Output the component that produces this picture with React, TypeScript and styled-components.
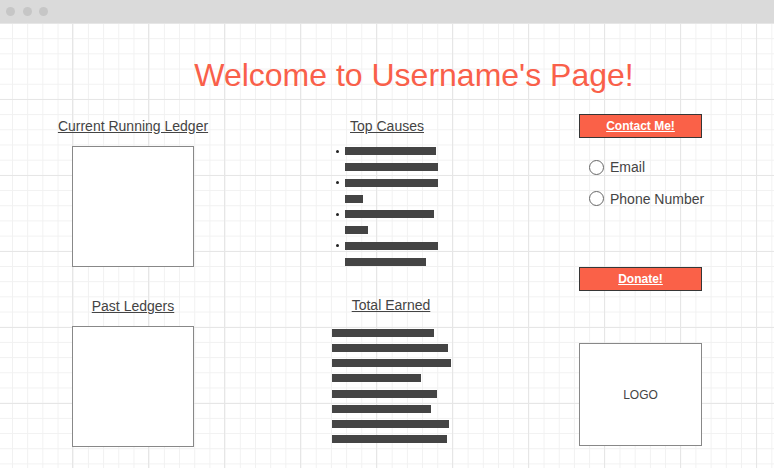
import styled, { createGlobalStyle } from 'styled-components'

const GlobalStyle = createGlobalStyle`
  html, body {
    margin: 0;
    padding: 0;
    background: #fff;
    overflow: hidden;
  }
  body {
    font-family: "Liberation Sans", Arial, sans-serif;
  }
`

const Window = styled.div`
  width: 774px;
  height: 468px;
  display: flex;
  flex-flow: column;
`

const TitleBar = styled.div`
  height: 23px;
  flex-shrink: 0;
  background: #dadada;
  display: flex;
  align-items: center;
  gap: 7.6px;
  padding-left: 6px;
`

const Dot = styled.span`
  width: 9px;
  height: 9px;
  border-radius: 50%;
  background: #c6c6c6;
`

const Canvas = styled.div`
  flex: 1;
  padding-top: 32px;
  background-color: #fff;
  background-image:
    linear-gradient(to right, #e6e6e6 1px, transparent 1px),
    linear-gradient(to bottom, #e6e6e6 1px, transparent 1px),
    linear-gradient(to right, #f1f1f1 1px, transparent 1px),
    linear-gradient(to bottom, #f1f1f1 1px, transparent 1px);
  background-size: 76px 100%, 100% 76px, 15.2px 100%, 100% 15.2px;
  background-position: 72px 0, 0 0, 12px 0, 0 0;
`

const PageTitle = styled.h1`
  margin: 0;
  padding-left: 54px;
  text-align: center;
  font-size: 32px;
  line-height: 40px;
  font-weight: 400;
  color: #f9604a;
`

const Main = styled.div`
  display: grid;
  grid-template-columns: 186px 322px 185px;
  padding-left: 40px;
  margin-top: 19px;
`

const Column = styled.div<{ $pad?: number }>`
  display: flex;
  flex-flow: column;
  align-items: center;
  gap: 31px;
  padding-top: ${(p) => p.$pad ?? 0}px;
`

const Section = styled.div<{ $gap: number; $shift?: number }>`
  display: flex;
  flex-flow: column;
  align-items: center;
  gap: ${(p) => p.$gap}px;
  padding-left: ${(p) => p.$shift ?? 0}px;
`

const Heading = styled.h2`
  margin: 0;
  font-size: 14px;
  line-height: 16px;
  font-weight: 400;
  color: #444;
  text-decoration: underline;
`

const LedgerBox = styled.div`
  width: 122px;
  height: 121px;
  box-sizing: border-box;
  border: 1px solid #888;
  background: #fff;
`

const CauseList = styled.ul`
  list-style: none;
  margin: 0;
  padding: 0;
  display: flex;
  flex-flow: column;
  gap: 7.77px;
`

const CauseItem = styled.li`
  display: flex;
  align-items: flex-start;
  gap: 6px;
`

const Bullet = styled.span`
  width: 3px;
  height: 3px;
  margin-top: 2.5px;
  border-radius: 50%;
  background: #222;
`

const BarStack = styled.div<{ $gap: number }>`
  display: flex;
  flex-flow: column;
  align-items: flex-start;
  gap: ${(p) => p.$gap}px;
`

const Bar = styled.div<{ $width: number }>`
  width: ${(p) => p.$width}px;
  height: 8px;
  background: #444;
`

const RightColumn = styled.div`
  display: flex;
  flex-flow: column;
  align-items: center;
`

const ActionButton = styled.button<{ $top?: number }>`
  width: 123px;
  height: 24px;
  margin-top: ${(p) => p.$top ?? 0}px;
  box-sizing: border-box;
  border: 1.5px solid #363636;
  background: #fa6148;
  color: #fff;
  font-family: "Liberation Sans", Arial, sans-serif;
  font-size: 12px;
  font-weight: 700;
  text-decoration: underline;
  padding: 0;
  cursor: pointer;
`

const RadioGroup = styled.div`
  align-self: flex-start;
  margin-top: 21px;
  padding-left: 41px;
  display: flex;
  flex-flow: column;
  gap: 15.7px;
`

const RadioRow = styled.label`
  display: flex;
  align-items: center;
  gap: 6px;
  height: 16px;
  font-size: 14px;
  color: #444;
`

const RadioCircle = styled.span`
  width: 15px;
  height: 15px;
  box-sizing: border-box;
  border: 1px solid #666;
  border-radius: 50%;
  background: #fff;
`

const LogoBox = styled.div`
  width: 123px;
  height: 103px;
  margin-top: 52px;
  padding-top: 2px;
  box-sizing: border-box;
  border: 1px solid #888;
  background: #fff;
  display: flex;
  align-items: center;
  justify-content: center;
  font-size: 12px;
  color: #444;
`

const causes = [
  [91, 93],
  [93, 18],
  [89, 23],
  [93, 81],
]

const earned = [102, 116, 119, 89, 105, 99, 117, 115]

const App = () => (
  <Window>
    <GlobalStyle />
    <TitleBar>
      <Dot />
      <Dot />
      <Dot />
    </TitleBar>
    <Canvas>
      <PageTitle>Welcome to Username's Page!</PageTitle>
      <Main>
        <Column $pad={3.5}>
          <Section $gap={12}>
            <Heading>Current Running Ledger</Heading>
            <LedgerBox />
          </Section>
          <Section $gap={12}>
            <Heading>Past Ledgers</Heading>
            <LedgerBox />
          </Section>
        </Column>
        <Column $pad={3.5}>
          <Section $gap={13.8}>
            <Heading>Top Causes</Heading>
            <CauseList>
              {causes.map((pair, i) => (
                <CauseItem key={i}>
                  <Bullet />
                  <BarStack $gap={7.77}>
                    {pair.map((w, j) => (
                      <Bar key={j} $width={w} />
                    ))}
                  </BarStack>
                </CauseItem>
              ))}
            </CauseList>
          </Section>
          <Section $gap={16.3} $shift={8}>
            <Heading>Total Earned</Heading>
            <BarStack $gap={7.15}>
              {earned.map((w, i) => (
                <Bar key={i} $width={w} />
              ))}
            </BarStack>
          </Section>
        </Column>
        <RightColumn>
          <ActionButton>Contact Me!</ActionButton>
          <RadioGroup>
            <RadioRow>
              <RadioCircle />
              Email
            </RadioRow>
            <RadioRow>
              <RadioCircle />
              Phone Number
            </RadioRow>
          </RadioGroup>
          <ActionButton $top={60}>Donate!</ActionButton>
          <LogoBox>LOGO</LogoBox>
        </RightColumn>
      </Main>
    </Canvas>
  </Window>
)

export default App
